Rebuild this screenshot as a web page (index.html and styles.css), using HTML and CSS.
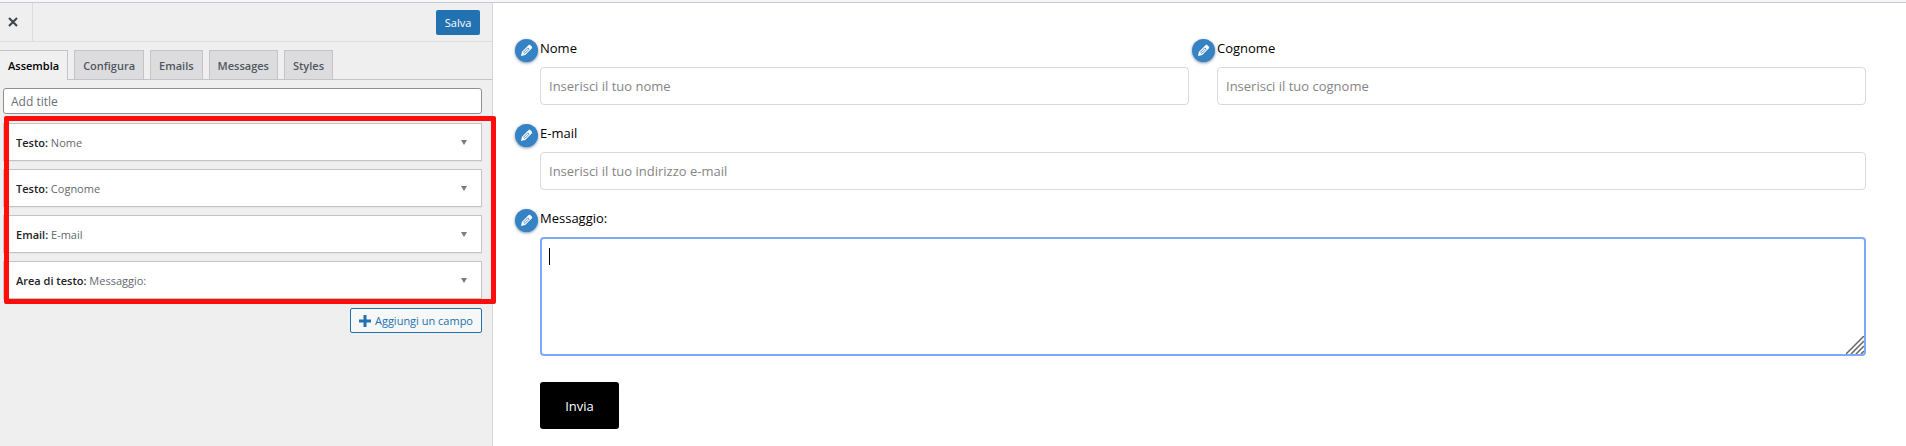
FILE: index.html
```html
<!DOCTYPE html>
<html lang="it">

<head>
    <meta charset="UTF-8">
    <meta name="viewport" content="width=device-width, initial-scale=1.0">
    <title>Modulo di contatto</title>
    <link rel="stylesheet" href="styles.css">
</head>

<body>

    <!-- pencil shared by the edit buttons -->
    <svg class="sprite" width="0" height="0" aria-hidden="true">
        <symbol id="pencil" viewBox="0 0 20 20">
            <path fill="#fff" d="M13 2c1-1 2-1 3 0l2 2c1 1 1 2 0 3L8 17l-6.500 1.500L3 12z"/>
            <path fill="none" stroke="#3582c4" stroke-width="1.300" d="M5.500 12.500l6.500-6.500 2 2-6.500 6.500z"/>
        </symbol>
    </svg>

    <div class="builder">
        <aside class="sidebar">
            <header class="sidebar__header">
                <button type="button" class="sidebar__close" aria-label="Chiudi">
                    <svg width="10" height="10" viewBox="0 0 10 10"><path d="M1 1l8 8M9 1l-8 8" stroke="#3c434a" stroke-width="2"/></svg>
                </button>
                <button type="button" class="sidebar__save">Salva</button>
            </header>

            <nav class="tabs">
                <a href="#" class="tabs__item tabs__item--active">Assembla</a>
                <a href="#" class="tabs__item">Configura</a>
                <a href="#" class="tabs__item">Emails</a>
                <a href="#" class="tabs__item">Messages</a>
                <a href="#" class="tabs__item">Styles</a>
            </nav>

            <div class="sidebar__body">
                <input type="text" class="title-input" placeholder="Add title" aria-label="Add title">

                <div class="fields">
                    <button type="button" class="field-row"><span><b>Testo:</b> Nome</span></button>
                    <button type="button" class="field-row"><span><b>Testo:</b> Cognome</span></button>
                    <button type="button" class="field-row"><span><b>Email:</b> E-mail</span></button>
                    <button type="button" class="field-row"><span><b>Area di testo:</b> Messaggio:</span></button>
                    <div class="fields__highlight"></div>
                </div>

                <button type="button" class="add-field">
                    <svg width="12" height="12" viewBox="0 0 12 12"><path d="M6 0v12M0 6h12" stroke="#2271b1" stroke-width="3"/></svg>
                    Aggiungi un campo
                </button>
            </div>
        </aside>

        <main class="preview">
            <form class="form">
                <div class="form__row">
                    <div class="form__group">
                        <button type="button" class="edit" aria-label="Modifica"><svg width="13" height="13"><use href="#pencil"/></svg></button>
                        <label for="nome">Nome</label>
                        <input type="text" id="nome" placeholder="Inserisci il tuo nome">
                    </div>
                    <div class="form__group">
                        <button type="button" class="edit" aria-label="Modifica"><svg width="13" height="13"><use href="#pencil"/></svg></button>
                        <label for="cognome">Cognome</label>
                        <input type="text" id="cognome" placeholder="Inserisci il tuo cognome">
                    </div>
                </div>
                <div class="form__group">
                    <button type="button" class="edit" aria-label="Modifica"><svg width="13" height="13"><use href="#pencil"/></svg></button>
                    <label for="email">E-mail</label>
                    <input type="email" id="email" placeholder="Inserisci il tuo indirizzo e-mail">
                </div>
                <div class="form__group">
                    <button type="button" class="edit" aria-label="Modifica"><svg width="13" height="13"><use href="#pencil"/></svg></button>
                    <label for="messaggio">Messaggio:</label>
                    <div class="message">
                        <textarea id="messaggio"></textarea>
                        <span class="message__caret"></span>
                        <svg class="message__grip" width="18" height="18" viewBox="0 0 18 18"><path d="M0 18L18 0M5 18L18 5M10 18l8-8M15 18l3-3" stroke="#666" stroke-width="1.500"/></svg>
                    </div>
                </div>
                <button type="submit" class="form__submit">Invia</button>
            </form>
        </main>
    </div>

</body>

</html>
```

FILE: styles.css
```css
*,
*:before,
*:after {
    box-sizing: border-box;
}

body {
    margin: 0;
    background: #fff;
    font-family: 'Open Sans', 'Noto Sans', sans-serif;
    font-size: 13px;
}

button,
input,
textarea {
    font-family: inherit;
    font-size: inherit;
}

button {
    cursor: pointer;
}

.sprite {
    position: absolute;
}

.builder {
    display: flex;
    min-height: 100vh;
    border-top: 2px solid #f6f7f8;
}

/* sidebar */

.sidebar {
    flex: 0 0 493px;
    border-top: 1px solid #c9c9cd;
    border-right: 1px solid #d5d6d8;
    background: #efefef;
    font-size: 11px;
}

.sidebar__header {
    display: flex;
    align-items: center;
    justify-content: space-between;
    height: 39px;
    padding-right: 12px;
    border-bottom: 1px solid #dcdcde;
}

.sidebar__close {
    align-self: stretch;
    width: 33px;
    padding: 0 7px 0 0;
    border: 0;
    border-right: 1px solid #dcdcde;
    background: none;
}

.sidebar__save {
    width: 44px;
    height: 25px;
    padding: 0;
    border: 0;
    border-radius: 2px;
    background: #2271b1;
    color: #fff;
}

.tabs {
    display: flex;
    gap: 6px;
    padding-top: 8px;
    border-bottom: 1px solid #c3c4c7;
}

.tabs__item {
    height: 29px;
    padding: 0 8px;
    border: 1px solid #c3c4c7;
    border-bottom: 0;
    background: #dcdcde;
    color: #50575e;
    font-weight: 600;
    line-height: 29px;
    text-decoration: none;
}

.tabs__item--active {
    height: 30px;
    margin-bottom: -1px;
    border-left: 0;
    background: #f0f0f1;
    color: #000;
}

.sidebar__body {
    display: flex;
    flex-direction: column;
    padding: 8px 10px 8px 3px;
}

.title-input {
    height: 26px;
    padding: 0 7px;
    border: 1px solid #8c8f94;
    border-radius: 3px;
    background: #fff;
    font-size: 12px;
}

.title-input::placeholder {
    color: #6c7076;
}

.fields {
    position: relative;
    display: flex;
    flex-direction: column;
    gap: 8px;
    margin: 9px 0;
}

.field-row {
    display: flex;
    align-items: center;
    justify-content: space-between;
    height: 38px;
    padding: 0 14px 0 12px;
    border: 1px solid #c3c4c7;
    background: #fff;
    box-shadow: 0 1px 1px rgba(0, 0, 0, 0.04);
    color: #646970;
}

.field-row b {
    color: #1d2327;
    font-weight: 600;
}

.field-row:after {
    content: '';
    border: 3px solid transparent;
    border-top: 5px solid #787c82;
    border-bottom: 0;
}

.fields__highlight {
    position: absolute;
    top: -7px;
    right: -14px;
    bottom: -5px;
    left: 1px;
    border: 5px solid #ff0d0d;
    border-radius: 2px;
    pointer-events: none;
}

.add-field {
    display: flex;
    align-items: center;
    align-self: flex-end;
    gap: 4px;
    height: 25px;
    padding: 0 8px;
    border: 1px solid #2271b1;
    border-radius: 2px;
    background: #f6f7f7;
    color: #2271b1;
}

/* form preview */

.preview {
    flex: 1;
    border-top: 1px solid #c9c9cd;
    padding: 36px 40px 16px 47px;
}

.form,
.form__group {
    display: flex;
    flex-direction: column;
}

.form {
    gap: 19px;
}

.form__row {
    display: flex;
    gap: 28px;
}

.form__group {
    position: relative;
    flex: 1;
    gap: 10px;
}

.form__group label {
    line-height: 18px;
}

.form__group input,
.form__group textarea {
    width: 100%;
    height: 38px;
    padding: 0 8px;
    border: 1px solid #d9d9d9;
    border-radius: 4px;
    background: #fff;
    outline: 0;
}

.form__group input::placeholder {
    color: #858585;
}

.edit {
    position: absolute;
    top: 0;
    left: -25px;
    display: flex;
    align-items: center;
    justify-content: center;
    width: 23px;
    height: 23px;
    padding: 0;
    border: 0;
    border-radius: 50%;
    background: #3582c4;
    box-shadow: 0 1px 3px rgba(0, 40, 80, 0.5);
}

.message {
    position: relative;
    display: flex;
}

.form__group textarea {
    height: 119px;
    padding: 8px;
    border: 2px solid #7fa8f8;
    resize: none;
}

.message__caret {
    position: absolute;
    top: 11px;
    left: 9px;
    width: 1px;
    height: 17px;
    background: #000;
}

.message__grip {
    position: absolute;
    right: 2px;
    bottom: 2px;
}

.form__submit {
    align-self: flex-start;
    width: 79px;
    height: 47px;
    margin-top: 7px;
    border: 0;
    border-radius: 3px;
    background: #000;
    color: #fff;
}
```
